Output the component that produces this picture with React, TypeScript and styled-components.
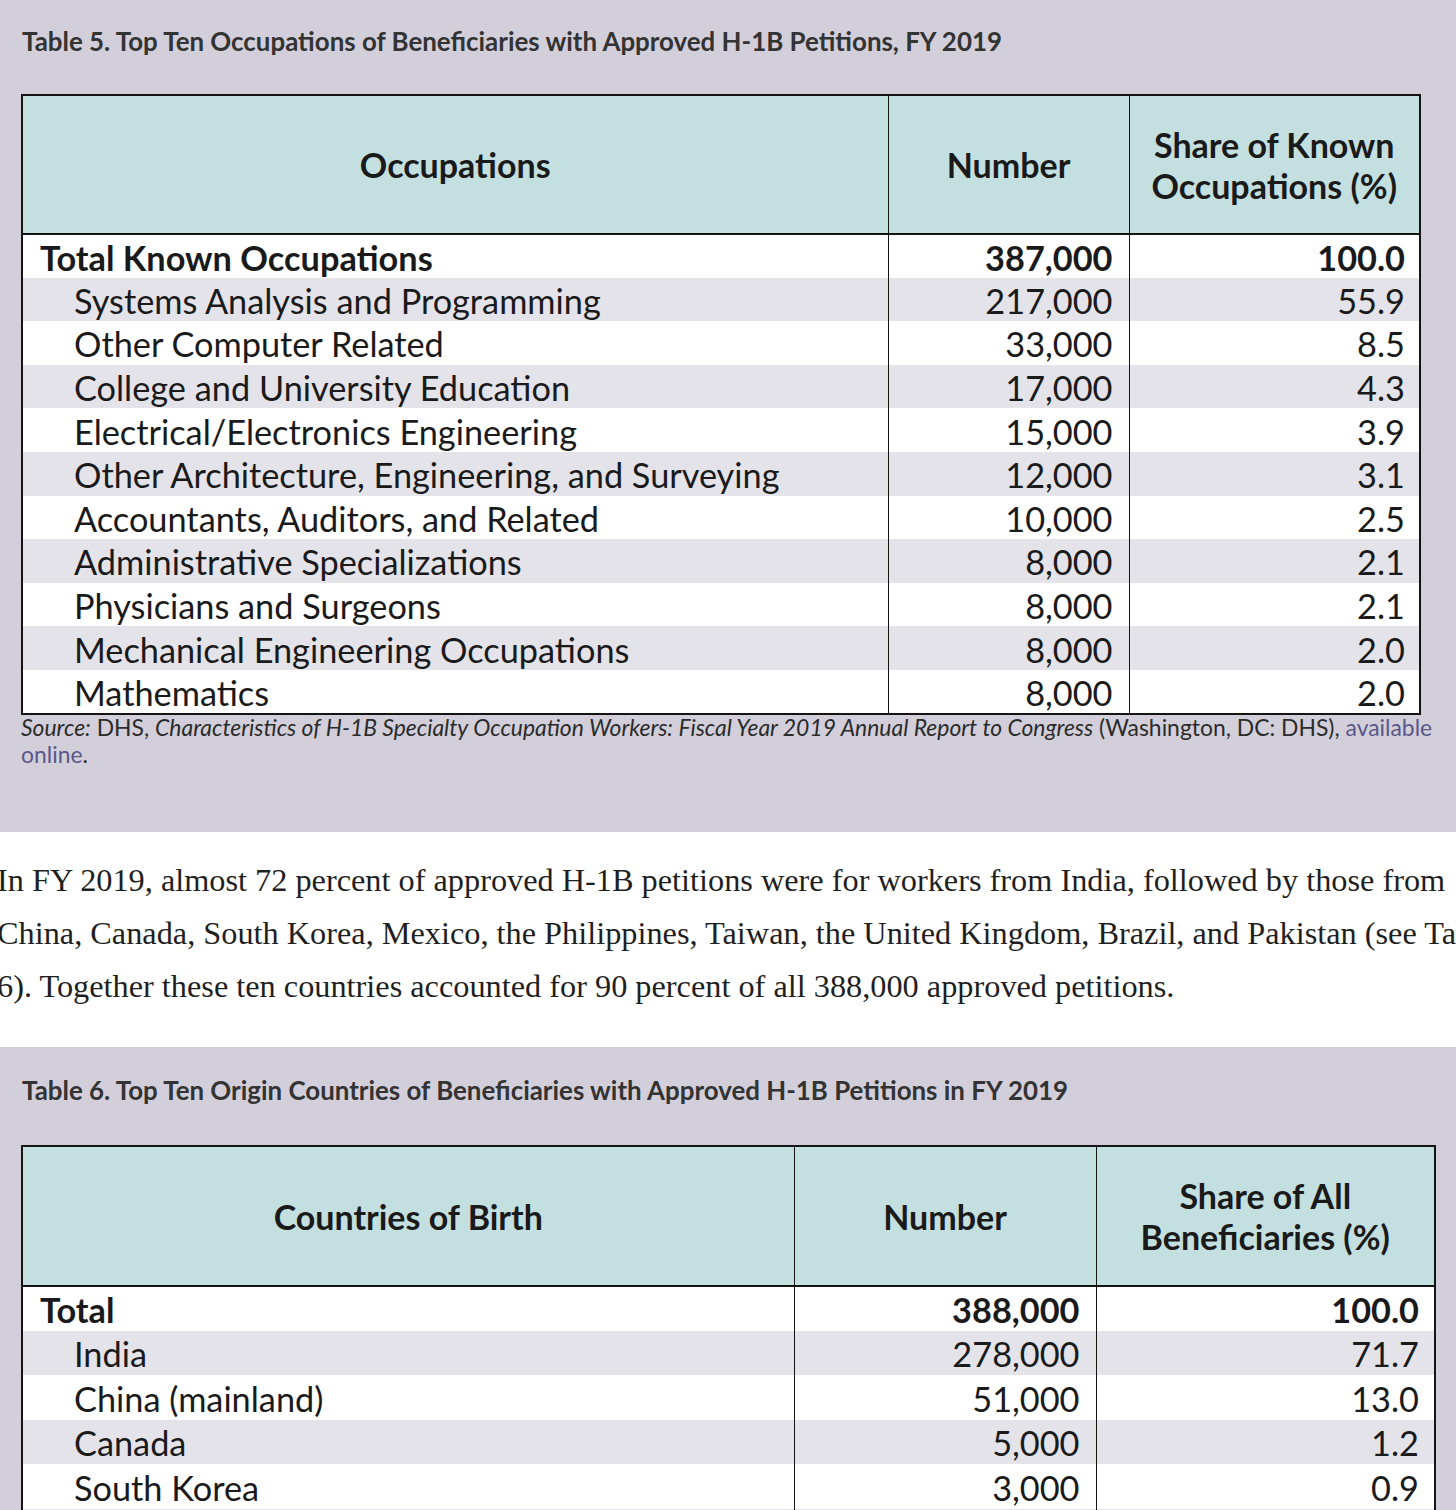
import React from "react";
import styled, { createGlobalStyle } from "styled-components";

const Global = createGlobalStyle`
  html, body { margin: 0; padding: 0; background: #ffffff; }
  * { box-sizing: border-box; }
`;

const Page = styled.div`
  width: 1456px;
  height: 1510px;
  overflow: hidden;
  background: #ffffff;
`;

const Panel = styled.section<{ $h?: number; $pt: number }>`
  background: #d2cfdb;
  padding: ${(p) => p.$pt}px 0 0 21px;
  ${(p) => (p.$h ? `height: ${p.$h}px;` : "")}
`;

const Title = styled.h3<{ $mb: number }>`
  margin: 0 0 ${(p) => p.$mb}px 1px;
  font-family: Lato, "Liberation Sans", sans-serif;
  font-weight: 700;
  font-size: 25.9px;
  line-height: 27px;
  color: #333333;
  white-space: nowrap;
`;

const Table = styled.table<{ $w: number }>`
  width: ${(p) => p.$w}px;
  border-collapse: collapse;
  table-layout: fixed;
  border: 2px solid #141414;
  font-family: Lato, "Liberation Sans", sans-serif;
  color: #1a1a1a;
`;

const HeadCell = styled.th`
  background: #c4dfe0;
  border: 1.5px solid #141414;
  border-bottom: 2px solid #141414;
  font-weight: 700;
  font-size: 34px;
  line-height: 41px;
  text-align: center;
  vertical-align: middle;
  padding: 0 4px;
  white-space: nowrap;
`;

const Row = styled.tr<{ $stripe: boolean; $h: number }>`
  height: ${(p) => p.$h}px;
  background: ${(p) => (p.$stripe ? "#e4e3ea" : "#ffffff")};
`;

const NameCell = styled.td<{ $bold: boolean }>`
  border-right: 1.5px solid #141414;
  padding: 3px 0 0 ${(p) => (p.$bold ? 17 : 51)}px;
  font-size: 34.3px;
  font-weight: ${(p) => (p.$bold ? 700 : 400)};
  line-height: 38px;
  white-space: nowrap;
  overflow: hidden;
`;

const NumCell = styled.td<{ $bold: boolean; $pr: number }>`
  border-right: 1.5px solid #141414;
  padding: 3px ${(p) => p.$pr}px 0 0;
  text-align: right;
  font-size: 34.3px;
  font-weight: ${(p) => (p.$bold ? 700 : 400)};
  line-height: 38px;
  white-space: nowrap;
`;

const Source = styled.p`
  margin: -1px 0 0 0;
  padding-right: 10px;
  font-family: Lato, "Liberation Sans", sans-serif;
  font-size: 22.9px;
  line-height: 27px;
  color: #2b2b2b;
`;

const Link = styled.a`
  color: #5b5789;
  text-decoration: none;
`;

const Body = styled.section`
  height: 215px;
  padding: 22px 0 0 0;
  margin-left: -3px;
  overflow: hidden;
`;

const Para = styled.p`
  margin: 0;
  font-family: "Liberation Serif", "DejaVu Serif", serif;
  font-size: 32.3px;
  line-height: 53px;
  color: #1f1f1f;
  white-space: nowrap;
`;

type R = { name: string; num: string; pct: string; bold?: boolean };

const occ: R[] = [
  { name: "Total Known Occupations", num: "387,000", pct: "100.0", bold: true },
  { name: "Systems Analysis and Programming", num: "217,000", pct: "55.9" },
  { name: "Other Computer Related", num: "33,000", pct: "8.5" },
  { name: "College and University Education", num: "17,000", pct: "4.3" },
  { name: "Electrical/Electronics Engineering", num: "15,000", pct: "3.9" },
  { name: "Other Architecture, Engineering, and Surveying", num: "12,000", pct: "3.1" },
  { name: "Accountants, Auditors, and Related", num: "10,000", pct: "2.5" },
  { name: "Administrative Specializations", num: "8,000", pct: "2.1" },
  { name: "Physicians and Surgeons", num: "8,000", pct: "2.1" },
  { name: "Mechanical Engineering Occupations", num: "8,000", pct: "2.0" },
  { name: "Mathematics", num: "8,000", pct: "2.0" },
];

const countries: R[] = [
  { name: "Total", num: "388,000", pct: "100.0", bold: true },
  { name: "India", num: "278,000", pct: "71.7" },
  { name: "China (mainland)", num: "51,000", pct: "13.0" },
  { name: "Canada", num: "5,000", pct: "1.2" },
  { name: "South Korea", num: "3,000", pct: "0.9" },
  { name: "Mexico", num: "", pct: "" },
];

type TProps = {
  w: number;
  cols: [number, number, number];
  heads: [React.ReactNode, React.ReactNode, React.ReactNode];
  headH: number;
  rowH: number;
  rows: R[];
  pr: [number, number];
};

const DataTable = ({ w, cols, heads, headH, rowH, rows, pr }: TProps) => (
  <Table $w={w}>
    <colgroup>
      {cols.map((c, i) => (
        <col key={i} style={{ width: c }} />
      ))}
    </colgroup>
    <thead>
      <tr style={{ height: headH }}>
        {heads.map((h, i) => (
          <HeadCell key={i}>{h}</HeadCell>
        ))}
      </tr>
    </thead>
    <tbody>
      {rows.map((r, i) => (
        <Row key={i} $stripe={i % 2 === 1} $h={rowH}>
          <NameCell $bold={!!r.bold}>{r.name}</NameCell>
          <NumCell $bold={!!r.bold} $pr={pr[0]}>{r.num}</NumCell>
          <NumCell $bold={!!r.bold} $pr={pr[1]}>{r.pct}</NumCell>
        </Row>
      ))}
    </tbody>
  </Table>
);

export default function App() {
  return (
    <Page>
      <Global />
      <Panel $h={832} $pt={28}>
        <Title $mb={39}>
          Table 5. Top Ten Occupations of Beneficiaries with Approved H-1B Petitions, FY 2019
        </Title>
        <DataTable
          w={1398}
          cols={[866, 241, 291]}
          heads={[
            "Occupations",
            "Number",
            <>
              Share of Known
              <br />
              Occupations (%)
            </>,
          ]}
          headH={139}
          rowH={43.6}
          rows={occ}
          pr={[16, 14]}
        />
        <Source>
          <i>Source:</i> DHS, <i>Characteristics of H-1B Specialty Occupation Workers: Fiscal Year 2019 Annual Report to Congress</i> (Washington, DC: DHS), <Link href="#">available online</Link>.
        </Source>
      </Panel>
      <Body>
        <Para>
          In FY 2019, almost 72 percent of approved H-1B petitions were for workers from India, followed by those from
          <br />
          China, Canada, South Korea, Mexico, the Philippines, Taiwan, the United Kingdom, Brazil, and Pakistan (see Table
          <br />
          6). Together these ten countries accounted for 90 percent of all 388,000 approved petitions.
        </Para>
      </Body>
      <Panel $pt={30}>
        <Title $mb={41}>
          Table 6. Top Ten Origin Countries of Beneficiaries with Approved H-1B Petitions in FY 2019
        </Title>
        <DataTable
          w={1413}
          cols={[772, 302, 339]}
          heads={[
            "Countries of Birth",
            "Number",
            <>
              Share of All
              <br />
              Beneficiaries (%)
            </>,
          ]}
          headH={140}
          rowH={44.5}
          rows={countries}
          pr={[16, 15]}
        />
      </Panel>
    </Page>
  );
}
